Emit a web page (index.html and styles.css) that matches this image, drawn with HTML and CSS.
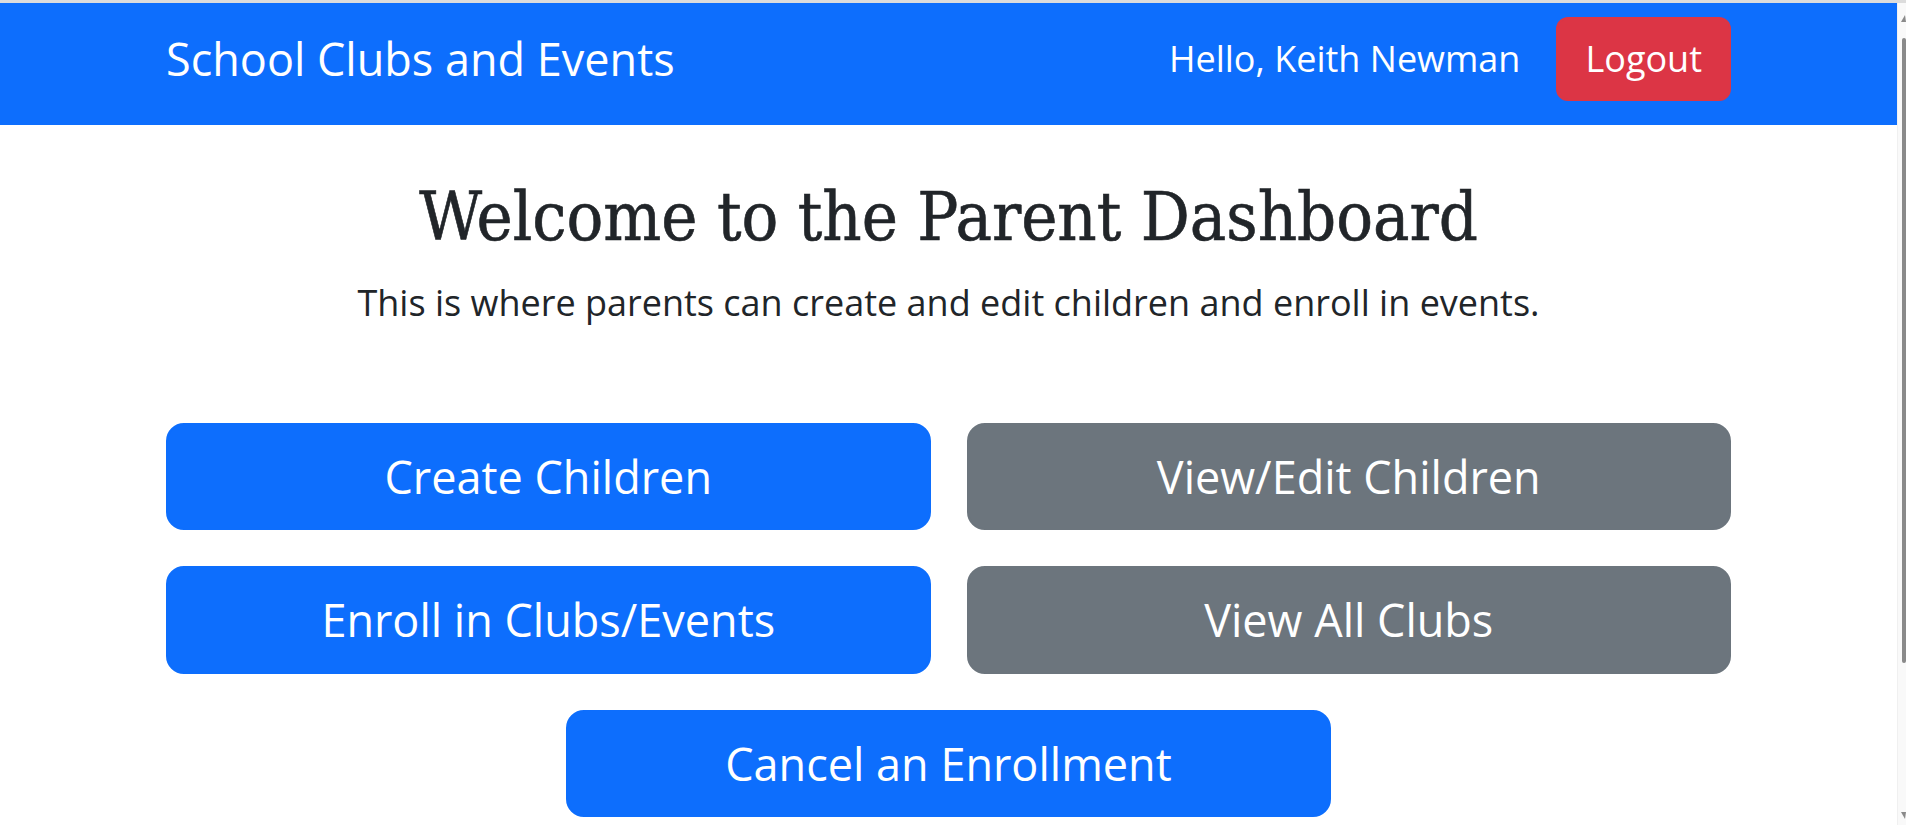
FILE: index.html
```html
<!DOCTYPE html>
<html lang="en">
<head>
<meta charset="utf-8">
<title>Parent Dashboard</title>
<link rel="stylesheet" href="styles.css">
</head>
<body>
  <div class="page">
    <nav class="navbar">
      <div class="container nav-inner">
        <a class="brand" href="#">School Clubs and Events</a>
        <div class="nav-right">
          <span class="hello">Hello, Keith Newman</span>
          <a class="btn btn-danger" href="#">Logout</a>
        </div>
      </div>
    </nav>
    <main class="container main">
      <h1 class="title">Welcome to the Parent Dashboard</h1>
      <p class="lead">This is where parents can create and edit children and enroll in events.</p>
      <div class="actions">
        <a class="btn-lg btn-primary" href="#">Create Children</a>
        <a class="btn-lg btn-secondary" href="#">View/Edit Children</a>
        <a class="btn-lg btn-primary" href="#">Enroll in Clubs/Events</a>
        <a class="btn-lg btn-secondary" href="#">View All Clubs</a>
      </div>
      <div class="actions-single">
        <a class="btn-lg btn-primary" href="#">Cancel an Enrollment</a>
      </div>
    </main>
  </div>
  <div class="scrollbar">
    <span class="arrow-up"></span>
    <span class="thumb"></span>
    <span class="track-rest"></span>
    <span class="arrow-down"></span>
  </div>
</body>
</html>
```

FILE: styles.css
```css
html, body {
  margin: 0;
  padding: 0;
}

body {
  display: flex;
  height: 825px;
  box-sizing: border-box;
  border-top: 3px solid #dcdcdc;
  overflow: hidden;
  background: #ffffff;
  font-family: "Open Sans", "Noto Sans", sans-serif;
  color: #212529;
}

.page {
  flex: 1;
  min-width: 0;
}

.container {
  width: 1565px;
  margin: 0 auto;
}

.navbar {
  background: #0d6efd;
  padding: 14px 0 24px;
}

.nav-inner {
  display: flex;
  align-items: center;
  justify-content: space-between;
  height: 84px;
}

.brand {
  font-size: 45px;
  line-height: 1.5;
  color: #ffffff;
  text-decoration: none;
}

.nav-right {
  display: flex;
  align-items: center;
  gap: 36px;
}

.hello {
  font-size: 36px;
  line-height: 1.5;
  color: #ffffff;
}

.btn {
  display: inline-block;
  font-size: 36px;
  line-height: 1.5;
  padding: 13px 27px;
  border: 2px solid transparent;
  border-radius: 12px;
  color: #ffffff;
  text-decoration: none;
}

.btn-danger {
  background: #dc3545;
  border-color: #dc3545;
}

.main {
  text-align: center;
}

.title {
  font-family: "DejaVu Serif Condensed", "DejaVu Serif", serif;
  font-stretch: condensed;
  font-weight: 400;
  font-size: 68px;
  line-height: 1.2;
  margin: 51px 0 18px;
  color: #212529;
  -webkit-text-stroke: 0.6px #212529;
}

.lead {
  font-size: 36px;
  line-height: 1.5;
  margin: 0 0 93px;
}

.actions {
  display: grid;
  grid-template-columns: 1fr 1fr;
  gap: 36px;
  margin-bottom: 36px;
}

.actions-single {
  display: flex;
  justify-content: center;
}

.actions-single .btn-lg {
  width: calc(50% - 18px);
  box-sizing: border-box;
}

.btn-lg {
  display: block;
  font-size: 45px;
  line-height: 1.5;
  padding: 18px 36px;
  border: 2px solid transparent;
  border-radius: 18px;
  color: #ffffff;
  text-decoration: none;
  text-align: center;
}

.btn-primary {
  background: #0d6efd;
  border-color: #0d6efd;
}

.btn-secondary {
  background: #6c757d;
  border-color: #6c757d;
}

.scrollbar {
  width: 9px;
  flex: none;
  display: flex;
  flex-direction: column;
  align-items: flex-end;
  background: #f9f9f9;
  border-left: 1px solid #f0f0f0;
  box-sizing: border-box;
}

.arrow-up {
  margin-top: 12px;
  width: 0;
  height: 0;
  border-left: 4px solid transparent;
  border-right: 1px solid transparent;
  border-bottom: 7px solid #8a8a8a;
}

.thumb {
  margin-top: 16px;
  width: 4px;
  height: 625px;
  border-radius: 2px;
  background: #8a8a8a;
}

.track-rest {
  flex: 1;
}

.arrow-down {
  margin-bottom: 6px;
  width: 0;
  height: 0;
  border-left: 4px solid transparent;
  border-right: 1px solid transparent;
  border-top: 7px solid #8a8a8a;
}
```
